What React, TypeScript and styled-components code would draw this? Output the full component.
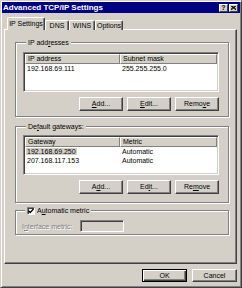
import React from 'react'
import styled, { createGlobalStyle } from 'styled-components'

const GlobalStyle = createGlobalStyle`
  html, body {
    margin: 0;
    padding: 0;
    background: #d4d0c8;
  }
  body {
    font-family: 'Liberation Sans', Arial, sans-serif;
    font-size: 7px;
    color: #000;
  }
`

const Window = styled.div`
  box-sizing: border-box;
  width: 242px;
  height: 288px;
  background: #d4d0c8;
  border: 1px solid;
  border-color: #d4d0c8 #404040 #404040 #d4d0c8;
  box-shadow: inset 1px 1px 0 #fff, inset -1px -1px 0 #808080;
  padding: 1px 1px 2px 1px;
  display: flex;
  flex-direction: column;
`

const TitleBar = styled.div`
  height: 11px;
  background: #000080;
  display: flex;
  align-items: center;
  justify-content: space-between;
  padding: 0 2px 0 1px;
`

const TitleText = styled.span`
  color: #fff;
  font-weight: bold;
  font-size: 8px;
  line-height: 11px;
`

const CaptionButtons = styled.div`
  display: flex;
  gap: 1px;
`

const CaptionButton = styled.div`
  box-sizing: border-box;
  width: 9px;
  height: 8px;
  background: #d4d0c8;
  border: 1px solid;
  border-color: #fff #404040 #404040 #fff;
  display: flex;
  align-items: center;
  justify-content: center;
  font-weight: bold;
  font-size: 7px;
  line-height: 6px;
`

const TabStrip = styled.div`
  display: flex;
  align-items: flex-end;
  height: 13px;
  margin: 4px 0 -1px 0;
  padding-left: 5px;
  position: relative;
  z-index: 1;
`

const Tab = styled.div<{ $active?: boolean; $w: number }>`
  box-sizing: border-box;
  width: ${(p) => p.$w}px;
  height: ${(p) => (p.$active ? 13 : 10)}px;
  background: #d4d0c8;
  border-top: 1px solid #fff;
  border-left: 1px solid #fff;
  border-right: 1px solid #404040;
  border-radius: 2px 2px 0 0;
  box-shadow: inset -1px 0 0 #808080;
  display: flex;
  align-items: ${(p) => (p.$active ? 'flex-start' : 'center')};
  padding-top: ${(p) => (p.$active ? 2 : 0)}px;
  justify-content: center;
  line-height: 8px;
`

const Panel = styled.div`
  box-sizing: border-box;
  margin-left: 2px;
  width: 233px;
  height: 235px;
  border: 1px solid;
  border-color: #fff #404040 #404040 #fff;
  box-shadow: inset -1px -1px 0 #808080;
  padding-left: 10px;
  display: flex;
  flex-direction: column;
`

const Group = styled.fieldset<{ $top: number; $pt: number; $pb: number; $pl: number }>`
  box-sizing: border-box;
  width: 214px;
  min-width: 0;
  margin: ${(p) => p.$top}px 0 0 0;
  border: 1px solid #808080;
  box-shadow: inset 1px 1px 0 #fff, 1px 1px 0 #fff;
  padding: ${(p) => `${p.$pt}px 9px ${p.$pb}px ${p.$pl}px`};
`

const Legend = styled.legend`
  padding: 0 2px;
  margin-left: 3px;
  line-height: 9px;
  background: #d4d0c8;
  display: flex;
  align-items: center;
  gap: 2px;
`

const U = styled.span`
  text-decoration: underline;
`

const List = styled.div<{ $h: number }>`
  box-sizing: border-box;
  width: 196px;
  height: ${(p) => p.$h}px;
  background: #fff;
  border: 1px solid;
  border-color: #808080 #fff #fff #808080;
  box-shadow: inset 1px 1px 0 #404040, inset -1px -1px 0 #d4d0c8;
  padding: 1px;
`

const Columns = styled.div`
  display: grid;
  grid-template-columns: 95px 1fr;
`

const HeaderCell = styled.div`
  box-sizing: border-box;
  height: 10px;
  background: #d4d0c8;
  border: 1px solid;
  border-color: #fff #808080 #808080 #fff;
  padding-left: 2px;
  line-height: 8px;
  white-space: nowrap;
  overflow: hidden;
`

const Cell = styled.div`
  padding-left: 2px;
  line-height: 9px;
  white-space: nowrap;
`

const Selected = styled.span`
  background: #d4d0c8;
  padding: 0 1px;
  margin-left: -1px;
`

const ButtonRow = styled.div<{ $w: number; $mt: number }>`
  display: flex;
  justify-content: flex-end;
  gap: 4px;
  width: ${(p) => p.$w}px;
  margin-top: ${(p) => p.$mt}px;
`

const Button = styled.div<{ $w: number; $h: number; $default?: boolean }>`
  box-sizing: border-box;
  width: ${(p) => p.$w}px;
  height: ${(p) => p.$h}px;
  background: #d4d0c8;
  border: 1px solid;
  border-color: ${(p) => (p.$default ? '#000' : '#fff #404040 #404040 #fff')};
  box-shadow: ${(p) =>
    p.$default
      ? 'inset 1px 1px 0 #fff, inset -1px -1px 0 #404040, inset -2px -2px 0 #808080'
      : 'inset -1px -1px 0 #808080'};
  display: flex;
  align-items: center;
  justify-content: center;
  line-height: 8px;
`

const CheckBox = styled.div`
  box-sizing: border-box;
  width: 8px;
  height: 8px;
  background: #fff;
  border: 1px solid;
  border-color: #808080 #fff #fff #808080;
  box-shadow: inset 1px 1px 0 #404040;
  display: flex;
  align-items: center;
  justify-content: center;
`

const FieldRow = styled.div`
  display: flex;
  align-items: center;
  gap: 10px;
`

const Disabled = styled.span`
  color: #808080;
  text-shadow: 1px 1px 0 #fff;
  width: 48px;
  white-space: nowrap;
`

const TextBox = styled.div`
  box-sizing: border-box;
  width: 44px;
  height: 12px;
  background: #d4d0c8;
  border: 1px solid;
  border-color: #808080 #fff #fff #808080;
  box-shadow: inset 1px 1px 0 #404040, inset -1px -1px 0 #d4d0c8;
`

const Footer = styled.div`
  display: flex;
  justify-content: flex-end;
  gap: 5px;
  margin-top: 5px;
  padding-right: 3px;
`

const CloseGlyph = () => (
  <svg width='5' height='4' viewBox='0 0 5 4'>
    <path d='M0 0 L5 4 M1 0 L5 3.2 M5 0 L0 4 M4 0 L0 3.2' stroke='#000' strokeWidth='0.9' />
  </svg>
)

const CheckGlyph = () => (
  <svg width='6' height='6' viewBox='0 0 6 6'>
    <path d='M0.5 2.8 L2.2 4.5 L5.5 1' stroke='#000' strokeWidth='1.3' fill='none' />
  </svg>
)

const App: React.FC = () => {
  return (
    <>
      <GlobalStyle />
      <Window>
        <TitleBar>
          <TitleText>Advanced TCP/IP Settings</TitleText>
          <CaptionButtons>
            <CaptionButton>?</CaptionButton>
            <CaptionButton>
              <CloseGlyph />
            </CaptionButton>
          </CaptionButtons>
        </TitleBar>

        <TabStrip>
          <Tab $active $w={38}>IP Settings</Tab>
          <Tab $w={24}>DNS</Tab>
          <Tab $w={26}>WINS</Tab>
          <Tab $w={28}>Options</Tab>
        </TabStrip>

        <Panel>
          <Group $top={8} $pt={5} $pb={5} $pl={7}>
            <Legend>
              <span>
                IP add<U>r</U>esses
              </span>
            </Legend>
            <List $h={40}>
              <Columns>
                <HeaderCell>IP address</HeaderCell>
                <HeaderCell>Subnet mask</HeaderCell>
                <Cell>192.168.69.111</Cell>
                <Cell>255.255.255.0</Cell>
              </Columns>
            </List>
            <ButtonRow $w={196} $mt={5}>
              <Button $w={44} $h={14}>
                <span>
                  <U>A</U>dd...
                </span>
              </Button>
              <Button $w={44} $h={14}>
                <span>
                  <U>E</U>dit...
                </span>
              </Button>
              <Button $w={44} $h={14}>
                <span>
                  Remo<U>v</U>e
                </span>
              </Button>
            </ButtonRow>
          </Group>

          <Group $top={5} $pt={4} $pb={8} $pl={7}>
            <Legend>
              <span>
                De<U>f</U>ault gateways:
              </span>
            </Legend>
            <List $h={40}>
              <Columns>
                <HeaderCell>Gateway</HeaderCell>
                <HeaderCell>Metric</HeaderCell>
                <Cell>
                  <Selected>192.168.69.250</Selected>
                </Cell>
                <Cell>Automatic</Cell>
                <Cell>207.168.117.153</Cell>
                <Cell>Automatic</Cell>
              </Columns>
            </List>
            <ButtonRow $w={196} $mt={5}>
              <Button $w={44} $h={14}>
                <span>
                  A<U>d</U>d...
                </span>
              </Button>
              <Button $w={44} $h={14}>
                <span>
                  Ed<U>i</U>t...
                </span>
              </Button>
              <Button $w={44} $h={14}>
                <span>
                  Re<U>m</U>ove
                </span>
              </Button>
            </ButtonRow>
          </Group>

          <Group $top={3} $pt={5} $pb={2} $pl={6}>
            <Legend>
              <CheckBox>
                <CheckGlyph />
              </CheckBox>
              <span>
                A<U>u</U>tomatic metric
              </span>
            </Legend>
            <FieldRow>
              <Disabled>
                I<U>n</U>terface metric:
              </Disabled>
              <TextBox />
            </FieldRow>
          </Group>
        </Panel>

        <Footer>
          <Button $w={45} $h={13} $default>
            OK
          </Button>
          <Button $w={45} $h={13}>
            Cancel
          </Button>
        </Footer>
      </Window>
    </>
  )
}

export default App
